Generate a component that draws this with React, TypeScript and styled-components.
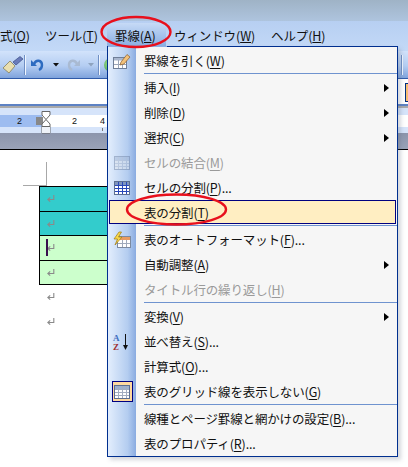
import React from 'react';
import styled, { createGlobalStyle } from 'styled-components';

const Global = createGlobalStyle`
  html, body { margin: 0; padding: 0; background: #fff; overflow: hidden; }
  * { box-sizing: border-box; }
`;
const font = `"Noto Sans CJK JP", "Noto Sans", sans-serif`;

const Page = styled.div`
  position: relative; width: 408px; height: 467px; overflow: hidden;
  background: #fff; font-family: ${font}; font-size: 12.5px; color: #111;
`;
const TitleBand = styled.div`
  height: 21px; background: linear-gradient(#9fb3c6, #aec4de);
`;
const MenuBar = styled.div`
  height: 30px; background: linear-gradient(#b7cff2, #c3d9f7);
  display: flex; align-items: flex-start; padding-top: 2px; white-space: nowrap;
`;
const BarItem = styled.span<{ $w: number; $open?: boolean; $gap?: number }>`
  flex: none; width: ${p => p.$w}px; padding-left: ${p => (p.$open ? 8 : 0)}px;
  margin-left: ${p => p.$gap ?? 0}px; height: 25px; line-height: 25px; letter-spacing: -0.1px;
  ${p => p.$open && 'background: linear-gradient(#c6daf6, #86abe0);'}
`;
const Toolbar = styled.div`
  height: 28px; background: linear-gradient(#d2e3fb, #b4cdf2 55%, #7fa3dc);
  display: flex; align-items: center; padding-left: 2px;
  border-bottom: 1px solid #2f5aa8;
`;
const ToolSlot = styled.span<{ $w: number }>`
  flex: none; width: ${p => p.$w}px; display: flex; justify-content: center; align-items: center;
`;
const Sep = styled.span`
  flex: none; width: 1px; height: 20px; background: #6f8fc4; box-shadow: 1px 0 0 #f0f6ff;
`;
const Globe = styled.span`
  flex: none; width: 14px; height: 14px; margin-left: 5px; border-radius: 50%;
  background: radial-gradient(circle at 40% 40%, #9fe08a, #3a9a55);
`;
const WhiteBand = styled.div`
  height: 25px; background: #fff;
`;
const RulerZone = styled.div`
  height: 46px; display: flex; flex-direction: column; position: relative;
  border-top: 2px solid #5d82c4; background: #d6e4fa; 
`;
const RulerEdge = styled.div`
  height: 2px; background: #a9a9a9; flex: none;
`;
const RulerPad = styled.div`
  height: 7px; flex: none;
`;
const RulerStrip = styled.div`
  height: 12px; flex: none; display: flex; font-size: 9px; font-family: "Liberation Sans", sans-serif;
  line-height: 12px; color: #111;
`;
const RulerGrey = styled.div`
  width: 42px; background: #9dbcf0; padding-left: 17px;
`;
const RulerWhite = styled.div`
  flex: 1; background: #fff; display: flex; padding-left: 30px; gap: 23px;
`;
const RulerBottom = styled.div`
  height: 6px; flex: none; position: relative;
`;
const Tick = styled.span`
  position: absolute; left: 102px; top: 1px; width: 1px; height: 3px; background: #777;
`;
const RulerFoot = styled.div`
  flex: 1; background: linear-gradient(#8c95ac, #9aa3b8); border-bottom: 1px solid #000;
`;
const Dotted = styled.span`
  position: absolute; left: 36px; top: 11px; width: 7px; height: 8px;
  background-image: radial-gradient(#888 50%, transparent 55%); background-size: 2px 2px;
`;
const Indent = styled.svg`
  position: absolute; left: 41px; top: 5px;
`;
const Doc = styled.div`
  position: relative; height: 317px; background: #fff; padding: 36px 0 0 39px;
`;
const Crop = styled.div`
  position: absolute; left: 23px; top: 12px; width: 24px; height: 24px;
  border-right: 1px solid #a8a8a8; border-bottom: 1px solid #a8a8a8;
`;
const Table = styled.div`
  width: 70px; border: 1px solid #000; border-bottom: 0;
`;
const Cell = styled.div<{ $bg: string; $h: number }>`
  height: ${p => p.$h}px; background: ${p => p.$bg}; border-bottom: 1px solid #000;
  display: flex; align-items: center; padding-left: 7px; position: relative;
`;
const Caret = styled.span`
  position: absolute; left: 6px; top: 3px; width: 2px; height: 17px; background: #3a0f4e;
`;
const ParaRow = styled.div`
  height: 24.5px; display: flex; align-items: center; padding-left: 8px;
`;
const Menu = styled.div`
  position: absolute; left: 107px; top: 46px; width: 291px; height: 411px;
  border: 1px solid #002f8f; background: #f6f6f6; box-shadow: 3px 3px 4px rgba(90,100,120,.25);
  display: flex; flex-direction: column;
`;
const MenuTopGap = styled.div`
  position: absolute; left: 0; top: -1px; width: 59px; height: 1px; background: #8db0e4;
`;
const Row = styled.div<{ $sel?: boolean; $dis?: boolean }>`
  position: relative; flex: none; height: 25px; display: flex; align-items: center;
  color: ${p => (p.$dis ? '#9a9a9a' : '#111')};
  ${p => p.$sel && 'background: #ffeec2; box-shadow: inset 0 0 0 1px #000080; margin: 0 1px 1px 1px; height: 24px;'}
`;
const Side = styled.div<{ $sel?: boolean }>`
  flex: none; width: ${p => (p.$sel ? 27 : 28)}px; height: 100%;
  display: flex; align-items: center; justify-content: center;
`;
const SideBar = styled.div`
  position: absolute; left: 0; top: 0; bottom: 0; width: 28px;
  background-image: linear-gradient(90deg, #e3eefd, #b4cdf0 70%, #8aabe0);
`;
const Label = styled.span`
  margin-left: 8px; white-space: nowrap; letter-spacing: -0.15px; line-height: 25px; position: relative;
  u { text-underline-offset: 2px; }
`;
const Arrow = styled.span`
  position: absolute; right: 8px; top: 50%; margin-top: -4px;
  width: 0; height: 0; border-left: 5px solid #000; border-top: 4px solid transparent; border-bottom: 4px solid transparent;
`;
const Divider = styled.div`
  flex: none; height: 2px; margin-left: 36px; background: #6f93cf; border-bottom: 1px solid #f6f6f6; position: relative;
`;
const ItemList = styled.div`
  position: relative; display: flex; flex-direction: column; padding-top: 1px;
`;
const ActiveIcon = styled.span`
  width: 21px; height: 21px; background: #ffd9a0; border: 1px solid #000080; display: flex; align-items: center; justify-content: center;
`;
const Ring = styled.svg`
  position: absolute; left: 0; top: 0; width: 408px; height: 467px; pointer-events: none;
`;
const RightSep = styled.span`
  position: absolute; left: 401px; top: 55px; width: 1px; height: 20px; background: #6f8fc4; box-shadow: 1px 0 0 #f0f6ff;
`;
const OrangeBtn = styled.span`
  position: absolute; left: 405px; top: 83px; width: 3px; height: 19px;
  background: #f7bd74; border: 1px solid #00307f; border-right: 0;
`;

const Ret = () => (
  <svg width="8" height="8" viewBox="0 0 8 8">
    <path d="M6.8 0V4.5H1.2M3.2 2.3L.8 4.5L3.2 6.7" fill="none" stroke="#8a8a8a" strokeWidth="1.1" />
  </svg>
);
const GridIcon = ({ fade, blue }: { fade?: boolean; blue?: boolean }) => (
  <svg width="16" height="14" viewBox="0 0 16 14" opacity={fade ? 0.4 : 1}>
    <rect x=".5" y=".5" width="15" height="13" fill={fade ? '#e8e8e8' : '#fff'} stroke="#5d6f90" />
    <rect x="1" y="1" width="14" height="3" fill={blue ? '#7f95bd' : '#9db0cf'} />
    {[4, 7, 10].map(y => <path key={y} d={`M1 ${y + 0.5}H15`} stroke={blue ? '#2848b8' : '#a3adc0'} />)}
    {[4, 8, 12].map(x => <path key={x} d={`M${x + 0.5} 1V13`} stroke={blue ? '#2848b8' : '#a3adc0'} />)}
  </svg>
);
const PencilIcon = () => (
  <svg width="20" height="18" viewBox="0 0 20 18">
    <rect x="1.5" y="5.5" width="13" height="11" fill="#fff" stroke="#6f7f98" />
    <rect x="2" y="6" width="12" height="2.5" fill="#a9b7cf" />
    <path d="M2 12.5H14M6.5 8V16M10.5 8V16" stroke="#9aa6ba" />
    <path d="M9 10L15 2.5L18 5L12 12L8 13Z" fill="#f2c27a" stroke="#8a5a2a" strokeWidth=".7" />
  </svg>
);
const AutoIcon = () => (
  <svg width="20" height="18" viewBox="0 0 20 18">
    <rect x="5.5" y="5.5" width="13" height="11" fill="#fff" stroke="#7c8aa0" />
    <rect x="6" y="6" width="12" height="3" fill="#e89a60" />
    <path d="M6 12.5H18M10.5 9V16M14.5 9V16" stroke="#a0aabb" />
    <path d="M7 1L2 8H5.5L3 14L10 6H6.5L9.5 1Z" fill="#f7d84a" stroke="#a07a10" strokeWidth=".7" />
  </svg>
);
const SortIcon = () => (
  <svg width="20" height="20" viewBox="0 0 20 20">
    <text x="1" y="9" fontSize="9" fontWeight="700" fontFamily="Liberation Serif, serif" fill="#3f6fc0">A</text>
    <text x="1" y="18" fontSize="9" fontWeight="700" fontFamily="Liberation Serif, serif" fill="#a03030">Z</text>
    <path d="M13.5 2V15" stroke="#111" strokeWidth="1" />
    <path d="M11 13L13.5 18L16 13Z" fill="#111" />
  </svg>
);
const BrushIcon = () => (
  <svg width="22" height="18" viewBox="0 0 22 18">
    <path d="M1 12L8 5L13 10L7 17Z" fill="#e9dfb0" stroke="#7c744a" strokeWidth=".7" />
    <path d="M11 6L18 0.5L21 3L14 9Z" fill="#6a7cba" stroke="#2e3e78" strokeWidth=".6" />
  </svg>
);
const UndoIcon = ({ grey }: { grey?: boolean }) => (
  <svg width="15" height="15" viewBox="0 0 15 15" style={{ transform: grey ? 'scaleX(-1)' : undefined }}>
    <path d="M4 7C6 2 12 3 12 8C12 10 11 12 9 13" fill="none" stroke={grey ? '#a9bad2' : '#2d6bc0'} strokeWidth="2.4" />
    <path d="M1 3V9H7Z" fill={grey ? '#a9bad2' : '#2d6bc0'} />
  </svg>
);
const Drop = ({ grey }: { grey?: boolean }) => (
  <svg width="6" height="4" viewBox="0 0 6 4"><path d="M0 0H6L3 3.5Z" fill={grey ? '#8ea3bf' : '#111'} /></svg>
);

type It = { t: string; k: string; rest?: string; icon?: React.ReactNode; dis?: boolean; arrow?: boolean; sel?: boolean };
const groupA: It[] = [{ t: '罫線を引く', k: 'W', icon: <PencilIcon /> }];
const groupB: It[] = [
  { t: '挿入', k: 'I', arrow: true },
  { t: '削除', k: 'D', arrow: true },
  { t: '選択', k: 'C', arrow: true },
  { t: 'セルの結合', k: 'M', dis: true, icon: <GridIcon fade /> },
  { t: 'セルの分割', k: 'P', rest: '...', icon: <GridIcon blue /> },
  { t: '表の分割', k: 'T', sel: true },
];
const groupC: It[] = [
  { t: '表のオートフォーマット', k: 'F', rest: '...', icon: <AutoIcon /> },
  { t: '自動調整', k: 'A', arrow: true },
  { t: 'タイトル行の繰り返し', k: 'H', dis: true },
];
const groupD: It[] = [
  { t: '変換', k: 'V', arrow: true },
  { t: '並べ替え', k: 'S', rest: '...', icon: <SortIcon /> },
  { t: '計算式', k: 'O', rest: '...' },
  { t: '表のグリッド線を表示しない', k: 'G', icon: <ActiveIcon><GridIcon /></ActiveIcon> },
];
const groupE: It[] = [
  { t: '線種とページ罫線と網かけの設定', k: 'B', rest: '...' },
  { t: '表のプロパティ', k: 'R', rest: '...' },
];

const Items = ({ list }: { list: It[] }) => (
  <>
    {list.map(i => (
      <Row key={i.t} $sel={i.sel} $dis={i.dis}>
        <Side $sel={i.sel}>{i.icon}</Side>
        <Label>{i.t}(<u>{i.k}</u>){i.rest}</Label>
        {i.arrow && <Arrow />}
      </Row>
    ))}
  </>
);

export default function App() {
  return (
    <Page>
      <Global />
      <TitleBand />
      <MenuBar>
        <BarItem $w={45}>式(<u>O</u>)</BarItem>
        <BarItem $w={62}>ツール(<u>T</u>)</BarItem>
        <BarItem $w={59} $open>罫線(<u>A</u>)</BarItem>
        <BarItem $w={97} $gap={8}>ウィンドウ(<u>W</u>)</BarItem>
        <BarItem $w={60}>ヘルプ(<u>H</u>)</BarItem>
      </MenuBar>
      <Toolbar>
        <ToolSlot $w={22}><BrushIcon /></ToolSlot>
        <Sep />
        <ToolSlot $w={25}><UndoIcon /></ToolSlot>
        <ToolSlot $w={12}><Drop /></ToolSlot>
        <ToolSlot $w={22}><UndoIcon grey /></ToolSlot>
        <ToolSlot $w={14}><Drop grey /></ToolSlot>
        <Sep />
        <Globe />
      </Toolbar>
      <WhiteBand />
      <RulerZone>
        <RulerEdge />
        <RulerPad />
        <RulerStrip>
          <RulerGrey>2</RulerGrey>
          <RulerWhite><span>2</span><span>4</span></RulerWhite>
        </RulerStrip>
        <RulerBottom><Tick /></RulerBottom>
        <RulerFoot />
        <Dotted />
        <Indent width="10" height="23" viewBox="0 0 10 23">
          <path d="M1 .5H9V4L5 8.5L1 4Z" fill="#fff" stroke="#666" />
          <path d="M5 8.5L9 13V22H1V13Z" fill="#fff" stroke="#666" />
          <path d="M1 15.5H9" stroke="#666" />
          <path d="M1 16H9V22H1Z" fill="#eef2f8" />
        </Indent>
      </RulerZone>
      <Doc>
        <Crop />
        <Table>
          <Cell $bg="#33cccc" $h={25}><Ret /></Cell>
          <Cell $bg="#33cccc" $h={24}><Ret /></Cell>
          <Cell $bg="#ccffcc" $h={25}><Caret /><Ret /></Cell>
          <Cell $bg="#ccffcc" $h={24}><Ret /></Cell>
        </Table>
        <ParaRow><Ret /></ParaRow>
        <ParaRow><Ret /></ParaRow>
      </Doc>
      <RightSep />
      <OrangeBtn />
      <Menu>
        <MenuTopGap />
        <SideBar />
        <ItemList>
          <Items list={groupA} />
          <Divider />
          <Items list={groupB} />
          <Divider />
          <Items list={groupC} />
          <Divider />
          <Items list={groupD} />
          <Divider />
          <Items list={groupE} />
        </ItemList>
      </Menu>
      <Ring viewBox="0 0 408 467">
        <ellipse cx="136" cy="32" rx="34.5" ry="15" fill="none" stroke="#e8101c" strokeWidth="2.4" />
        <ellipse cx="176.5" cy="209.5" rx="49.5" ry="15" fill="none" stroke="#e8101c" strokeWidth="2.4" />
      </Ring>
    </Page>
  );
}
